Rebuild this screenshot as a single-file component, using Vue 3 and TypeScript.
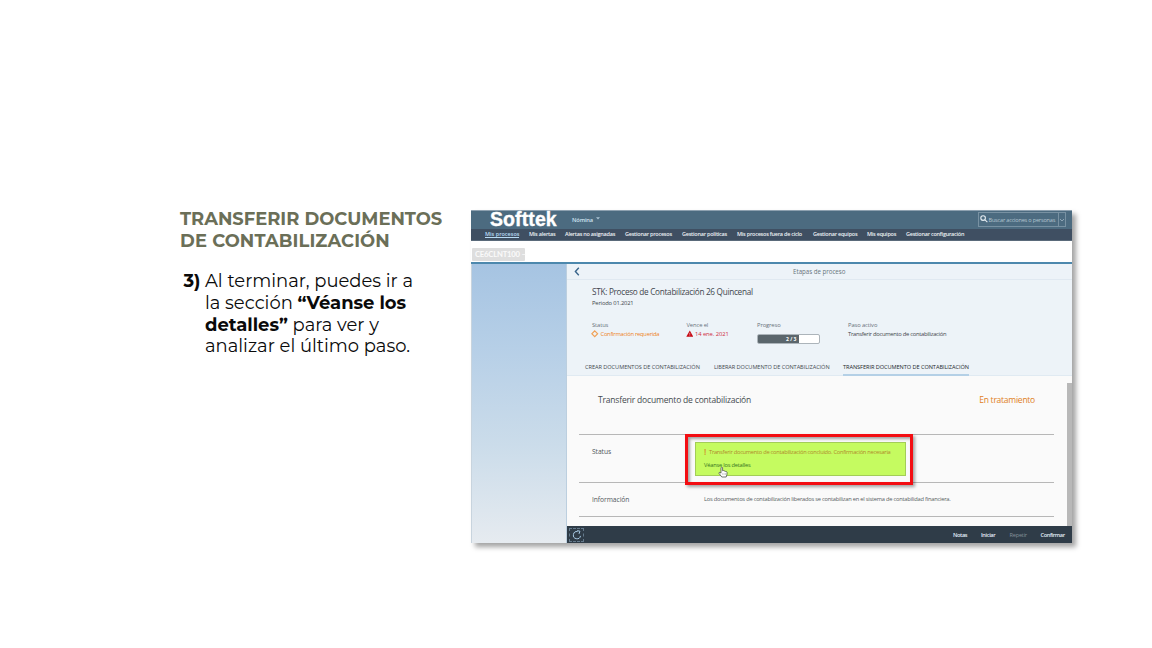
<script setup lang="ts">
interface Item { label: string; cls: string }

const nav: Item[] = [
  { label: 'Mis procesos', cls: 'n1 current' },
  { label: 'Mis alertas', cls: 'n2' },
  { label: 'Alertas no asignadas', cls: 'n3' },
  { label: 'Gestionar procesos', cls: 'n4' },
  { label: 'Gestionar políticas', cls: 'n5' },
  { label: 'Mis procesos fuera de ciclo', cls: 'n6' },
  { label: 'Gestionar equipos', cls: 'n7' },
  { label: 'Mis equipos', cls: 'n8' },
  { label: 'Gestionar configuración', cls: 'n9' },
]
const tabs: Item[] = [
  { label: 'CREAR DOCUMENTOS DE CONTABILIZACIÓN', cls: 't1' },
  { label: 'LIBERAR DOCUMENTO DE CONTABILIZACIÓN', cls: 't2' },
  { label: 'TRANSFERIR DOCUMENTO DE CONTABILIZACIÓN', cls: 't3 active' },
]
const actions: Item[] = [
  { label: 'Notas', cls: 'a1' },
  { label: 'Iniciar', cls: 'a2' },
  { label: 'Repetir', cls: 'a3 disabled' },
  { label: 'Confirmar', cls: 'a4' },
]
</script>

<template>
  <main class="slide">
    <section class="copy">
      <h1>TRANSFERIR DOCUMENTOS<br><span class="h-b">DE CONTABILIZACIÓN</span></h1>
      <div class="step">
        <b class="num">3)</b>
        <p>
          Al terminar, puedes ir a<br>
          la sección <b>“Véanse los</b><br>
          <b>detalles”</b> para ver y<br>
          analizar el último paso.
        </p>
      </div>
    </section>

    <section class="window">
      <header class="brandbar">
        <span class="logo">Softtek</span>
        <span class="area">Nómina</span>
        <svg class="caret" viewBox="0 0 4 3"><path d="M0 .3H4L2 2.6Z" fill="#a9c2d2" /></svg>
        <div class="search">
          <svg class="lens" viewBox="0 0 8 8"><circle cx="3.1" cy="3.1" r="2.3" /><path d="M4.9 4.9L7.4 7.2" /></svg>
          <span>Buscar acciones o personas</span>
          <i><svg viewBox="0 0 6 4"><path d="M1 1L3 3L5 1" /></svg></i>
        </div>
      </header>
      <nav class="nav">
        <div v-for="n in nav" :key="n.label" :class="n.cls"><span>{{ n.label }}</span></div>
      </nav>
      <div class="client"><span>CE6CLNT100 –</span></div>
      <div class="work">
        <aside class="side" />
        <div class="main">
          <div class="crumb">
            <svg viewBox="0 0 6 9"><path d="M4.8 .8L1.4 4.5L4.8 8.2" /></svg>
            <span>Etapas de proceso</span>
          </div>
          <div class="summary">
            <h2>STK: Proceso de Contabilización 26 Quincenal</h2>
            <p class="period">Periodo 01.2021</p>
            <div class="facts">
              <div>
                <label>Status</label>
                <p class="orange">
                  <svg viewBox="0 0 8 8"><path d="M4 .9L7.1 4L4 7.1L.9 4Z" fill="none" stroke="#f0a055" stroke-width="1.2" /></svg>
                  <span class="v1">Confirmación requerida</span>
                </p>
              </div>
              <div>
                <label>Vence el</label>
                <p class="red">
                  <svg viewBox="0 0 8 8"><path d="M4 .5L7.7 7.2H.3Z" fill="#c80a14" /><path d="M4 3V5M4 5.8V6.5" stroke="#eef3f8" stroke-width=".6" /></svg>
                  <span class="v2">14 ene. 2021</span>
                </p>
              </div>
              <div>
                <label>Progreso</label>
                <div class="meter"><b>2 / 3</b></div>
              </div>
              <div>
                <label>Paso activo</label>
                <p class="dark"><span class="v3">Transferir documento de contabilización</span></p>
              </div>
            </div>
          </div>
          <div class="tabs">
            <div v-for="t in tabs" :key="t.label" :class="t.cls"><span>{{ t.label }}</span></div>
          </div>
          <div class="detail">
            <div class="content">
              <div class="heading">
                <h3>Transferir documento de contabilización</h3>
                <span>En tratamiento</span>
              </div>
              <div class="row status">
                <span class="key">Status</span>
                <div class="notice">
                  <p class="warn"><b>!</b><span>Transferir documento de contabilización concluido. Confirmación necesaria</span></p>
                  <a>Véanse los detalles</a>
                </div>
                <div class="frame" />
                <svg class="hand" viewBox="0 0 10 12">
                  <path d="M3 7.2V1.6Q3.8.5 4.6 1.6V4.8Q5.5 4.1 6.1 5.1Q7 4.5 7.6 5.5Q8.7 5.2 9 6.3V8.2L8.2 11H3.8L1 7.4Q.8 6.2 2 6.3Z" fill="#fff" stroke="#4b564b" stroke-width=".8" stroke-linejoin="round" />
                  <path d="M4.7 7V9M6.1 7V9M7.5 7V9" stroke="#8b938b" stroke-width=".4" />
                </svg>
              </div>
              <div class="row info">
                <span class="key">Información</span>
                <span class="infotext">Los documentos de contabilización liberados se contabilizan en el sistema de contabilidad financiera.</span>
              </div>
            </div>
            <div class="scroll" />
          </div>
          <footer>
            <div class="refresh">
              <svg viewBox="0 0 10 10"><path d="M5.6 1.6A3.6 3.6 0 1 0 8.5 5.9M5.2 .6L7.9 1.2L7 3.9" /></svg>
            </div>
            <div class="actions">
              <div v-for="a in actions" :key="a.label" :class="a.cls"><span>{{ a.label }}</span></div>
            </div>
          </footer>
        </div>
      </div>
    </section>
  </main>
</template>

<style>
body { margin: 0; background: #fff; }
</style>

<style scoped>
* { box-sizing: border-box; }
h1, h2, h3, p { margin: 0; }
.slide { width: 1152px; height: 648px; padding: 210px 0 0 180px; display: flex; overflow: hidden; background: #fff; font-family: "Open Sans", "Noto Sans", sans-serif; white-space: nowrap; }
.copy { width: 291px; flex: none; font-family: Montserrat, Inter, sans-serif; }
h1 { margin-top: -2px; font-size: 17.9px; line-height: 21.7px; font-weight: 700; color: #6b6f58; }
.h-b { letter-spacing: .1px; }
.step { display: flex; padding-left: 3px; margin-top: 20px; font-size: 17.95px; line-height: 21.6px; color: #0a0a0a; }
.num { width: 22px; padding-left: .5px; flex: none; }

.window { width: 600.5px; height: 333px; flex: none; box-shadow: 4px 4px 5px rgba(0, 0, 0, .36); background: #fff; font-size: 5.8px; letter-spacing: -.15px; }
.brandbar { height: 19px; background: #4c6b80; display: flex; align-items: center; border-top: 1px solid #8ea1b0; }
.logo { margin: -2px 0 0 19px; width: 82px; font: 700 19.5px/18px "Liberation Sans", sans-serif; letter-spacing: .1px; color: #fff; -webkit-text-stroke: .35px #fff; }
.area { margin-top: -1px; color: #cfe3f0; font-size: 5.7px; font-weight: 600; }
.caret { width: 4px; height: 3px; margin: -3px 0 0 3px; }
.search { margin: -1px 6px 0 auto; width: 88px; height: 15px; border: 1px solid #7891a2; display: flex; align-items: center; color: #b3c5d1; font-size: 5.6px; }
.search span { width: 69px; flex: none; letter-spacing: -.21px; }
.lens { width: 8px; height: 8px; margin: -2px 1px 0 1px; fill: none; stroke: #e6edf2; stroke-width: 1.1; flex: none; }
.search i { width: 9px; height: 13px; border-left: 1px solid #7891a2; display: flex; align-items: center; justify-content: center; }
.search i svg { width: 6px; fill: none; stroke: #a9bdca; stroke-width: .7; }
.nav { height: 12px; background: #3f4f62; display: flex; padding-left: 14px; color: #eef2f6; font-size: 5.5px; line-height: 10px; font-weight: 600; border-bottom: 1px solid #5a6a7a; letter-spacing: -.24px; }
.nav > div { flex: none; }
.current { letter-spacing: 0; }
.current span { color: #b9dcf6; border-bottom: 1px solid #b9dcf6; line-height: 6px; display: inline-block; height: 7px; }
.n1 { width: 44px; } .n2 { width: 36px; } .n3 { width: 60px; } .n4 { width: 57px; } .n5 { width: 55px; } .n6 { width: 76px; } .n7 { width: 54px; } .n8 { width: 39px; }
.client { height: 21px; padding: 7px 0 0 1px; }
.client span { display: block; width: 53px; height: 13px; padding-left: 3px; background: #dedede; border-radius: 1px; color: #fafafa; font: 700 7.7px/13px Lato, sans-serif; letter-spacing: -.22px; }
.work { height: 281px; display: flex; border-top: 2px solid #4c88ad; }
.side { width: 96px; background: linear-gradient(#a6c4e2, #b6cfe7 30%, #cbdcea 65%, #e6ebf0); border-left: 1px solid #c8d4de; border-right: 1px solid #bccfdf; }
.main { flex: 1; display: flex; flex-direction: column; background: #edf3f8; }
.crumb { height: 16px; border-bottom: 1px solid #e0e9f1; display: flex; align-items: center; justify-content: center; position: relative; font-size: 6.2px; color: #68737c; letter-spacing: -.03px; }
.crumb svg { position: absolute; left: 7px; top: 3px; width: 6px; height: 9px; fill: none; stroke: #3a668c; stroke-width: 1.4; }
.summary { height: 76px; padding: 6px 0 0 25px; color: #3f464d; }
h2 { font-size: 8.2px; line-height: 11px; font-weight: 400; letter-spacing: -.28px; }
.period { margin-top: 2px; line-height: 8px; font-size: 5.8px; letter-spacing: -.17px; }
.facts { margin-top: 14px; display: grid; grid-template-columns: 94.5px 70.5px 91px 150px; line-height: 9px; }
.facts label { display: block; color: #67717a; height: 9px; letter-spacing: -.1px; }
.facts p { display: flex; align-items: center; height: 9px; }
.facts p svg { width: 7.5px; height: 7.5px; margin: -1px 2px 0 -1px; }
.orange { color: #ee8224; }
.red { color: #cf2c3c; letter-spacing: -.07px; }
.v1 { letter-spacing: -.26px; }
.v3 { letter-spacing: -.28px; }
.meter { margin-top: 4px; width: 63px; height: 10px; border: 1px solid #acb4ba; border-radius: 2px; background: linear-gradient(90deg, #5b666c 67%, #fff 67%); }
.meter b { display: block; margin-left: 28px; font-size: 5px; line-height: 8px; color: #fff; letter-spacing: 0; }
.tabs { height: 20px; padding-left: 18px; display: flex; border-bottom: 1px solid #e0eaf2; font-size: 5.6px; line-height: 22px; color: #454b50; }
.t1 { width: 129px; letter-spacing: -.04px; } .t2 { width: 129px; letter-spacing: -.06px; } .t3 { width: 126px; letter-spacing: -.05px; }
.active { height: 20px; border-bottom: 2px solid #b4d0e6; color: #22272b; }
.detail { height: 150px; display: flex; background: #fafafa; }
.content { width: 487px; padding-left: 12px; }
.scroll { width: 4.5px; height: 143px; margin: 7px 0 0 auto; background: #b8b8b8; }
.heading { height: 59px; display: flex; justify-content: space-between; padding: 18px 19px 0 19px; font-size: 8.5px; line-height: 12px; color: #454a4f; border-bottom: 1px solid #b7b7b7; letter-spacing: -.18px; }
h3 { font: inherit; }
.heading span { color: #df7f1c; letter-spacing: -.25px; }
.row { position: relative; display: flex; border-bottom: 1px solid #b7b7b7; }
.status { height: 48px; }
.key { width: 103px; padding: 12px 0 0 13px; font-size: 6.7px; line-height: 10px; color: #51575c; letter-spacing: -.05px; }
.notice { margin: 7px 0 0 13px; width: 211px; height: 34px; background: #c5fb60; border: 1px solid #a3cd58; padding: 4px 0 0 8px; line-height: 10px; font-size: 5.7px; }
.warn { display: flex; color: #b08a2c; letter-spacing: -.25px; }
.warn b { width: 5px; font-size: 8px; font-weight: 600; color: #d28a28; }
.notice a { display: block; margin-top: 3px; color: #367322; letter-spacing: -.2px; }
.frame { position: absolute; left: 106px; top: -1px; width: 228px; height: 51px; border: 3px solid #f30d12; box-shadow: 2px 2px 3px rgba(0, 0, 0, .35), inset 2px 2px 3px rgba(0, 0, 0, .35); }
.hand { position: absolute; left: 139px; top: 31px; width: 10px; height: 12px; }
.info { height: 34px; }
.infotext { margin: 11px 0 0 22px; font-size: 5.7px; line-height: 10px; color: #575d62; letter-spacing: -.21px; }
footer { flex: 1; background: #2f3c48; display: flex; justify-content: space-between; align-items: center; }
.refresh { width: 15px; height: 14px; margin: 1px 0 0 2px; border: 1px dashed #657a8c; display: flex; align-items: center; justify-content: center; }
.refresh svg { width: 10px; height: 10px; fill: none; stroke: #a9cbe6; stroke-width: 1; }
.actions { display: flex; width: 118.5px; padding-top: 1px; color: #e3eefa; font-weight: 600; font-size: 5.6px; letter-spacing: -.36px; }
.a1 { width: 28px; } .a2 { width: 28.5px; } .a3 { width: 31px; }
.disabled { color: #84909b; font-weight: 400; letter-spacing: -.2px; }
</style>
